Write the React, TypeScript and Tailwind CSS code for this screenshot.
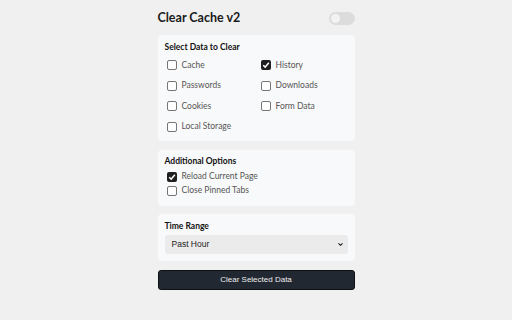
import { ChevronDown } from "lucide-react";

const dataItems = [
  { label: "Cache", checked: false },
  { label: "History", checked: true },
  { label: "Passwords", checked: false },
  { label: "Downloads", checked: false },
  { label: "Cookies", checked: false },
  { label: "Form Data", checked: false },
  { label: "Local Storage", checked: false },
];

const options = [
  { label: "Reload Current Page", checked: true },
  { label: "Close Pinned Tabs", checked: false },
];

const Box = ({ checked }: { checked: boolean }) =>
  checked ? (
    <span className="w-[10px] h-[10px] rounded-[2px] bg-[#1f1f1f] flex items-center justify-center flex-shrink-0">
      <svg viewBox="0 0 10 10" className="w-[8px] h-[8px]">
        <path d="M1.5 5.2 L4 7.6 L8.6 2.2" fill="none" stroke="#fff" strokeWidth="1.8" />
      </svg>
    </span>
  ) : (
    <span className="w-[10px] h-[10px] rounded-[2px] border border-[#767676] bg-white flex-shrink-0" />
  );

export default function App() {
  return (
    <div className="w-[512px] h-[320px] bg-[#f0f0f0] flex justify-center font-['Lato',sans-serif]">
      <div className="w-[197px] pt-[10px] flex flex-col">
        {/* header */}
        <div className="flex items-center justify-between h-[16px] mb-[9px]">
          <h1 className="text-[12.5px] leading-[16px] font-bold text-[#1a1a1a]">Clear Cache v2</h1>
          <div className="w-[26px] h-[13px] rounded-full bg-[#dcdcdc] p-[2px] flex items-center">
            <span className="w-[9px] h-[9px] rounded-full bg-[#f3f3f3]" />
          </div>
        </div>

        {/* data types */}
        <section className="bg-[#f8f9fa] rounded-[4px] px-[7px] pt-[7px] pb-[7.5px] mb-[9px]">
          <h2 className="text-[8.5px] leading-[10px] font-bold text-[#111] mb-[6.5px]">Select Data to Clear</h2>
          <div className="grid grid-cols-[94px_1fr] gap-y-[7.5px] pl-[2px]">
            {dataItems.map((item) => (
              <label key={item.label} className="flex items-center gap-[5px] h-[13px] text-[8.5px] text-[#555]">
                <Box checked={item.checked} />
                <span>{item.label}</span>
              </label>
            ))}
          </div>
        </section>

        {/* additional */}
        <section className="bg-[#f8f9fa] rounded-[4px] px-[7px] pt-[6px] pb-[8.5px] mb-[8px]">
          <h2 className="text-[8.5px] leading-[10px] font-bold text-[#111] mb-[4.5px]">Additional Options</h2>
          <div className="flex flex-col gap-[1px] pl-[2px]">
            {options.map((item) => (
              <label key={item.label} className="flex items-center gap-[5px] h-[13px] text-[8.5px] text-[#555]">
                <Box checked={item.checked} />
                <span>{item.label}</span>
              </label>
            ))}
          </div>
        </section>

        {/* time range */}
        <section className="bg-[#f8f9fa] rounded-[4px] px-[7px] pt-[7px] pb-[7px] mb-[9px]">
          <h2 className="text-[8.5px] leading-[10px] font-bold text-[#111] mb-[4px]">Time Range</h2>
          <div className="h-[19px] rounded-[3px] bg-[#ebebeb] flex items-center justify-between pl-[7px] pr-[4px] font-['Liberation_Sans',sans-serif] text-[8.5px] text-[#222]">
            <span>Past Hour</span>
            <ChevronDown className="w-[7px] h-[7px]" strokeWidth={3.5} />
          </div>
        </section>

        <button className="h-[20px] rounded-[3px] bg-[#222831] border border-[#111] text-[#eee] font-['Liberation_Sans',sans-serif] text-[8px]">
          Clear Selected Data
        </button>
      </div>
    </div>
  );
}
